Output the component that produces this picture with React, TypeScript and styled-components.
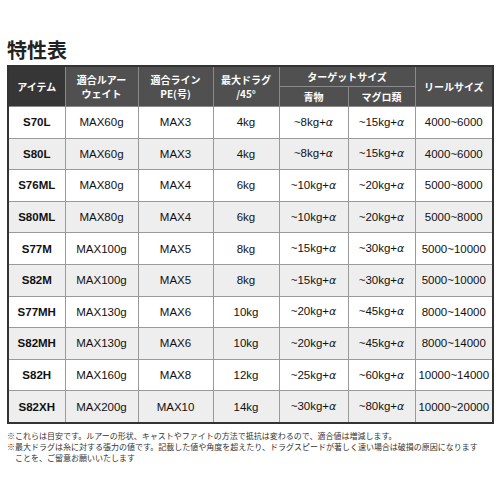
import styled, { createGlobalStyle } from "styled-components";

const GlobalStyle = createGlobalStyle`
  html, body {
    margin: 0;
    padding: 0;
    background: #fff;
  }
  body {
    font-family: "Liberation Sans", "Noto Sans CJK JP", sans-serif;
    color: #1a1a1a;
  }
`;

const Page = styled.div`
  width: 496px;
  height: 496px;
  box-sizing: border-box;
  padding: 38px 4px 0 7px;
`;

const Title = styled.h2`
  margin: 0 0 3px;
  font-family: "Noto Sans CJK JP", sans-serif;
  font-size: 20px;
  line-height: 24px;
  font-weight: 700;
  color: #222;
`;

const Table = styled.table`
  width: 485px;
  table-layout: fixed;
  border-collapse: collapse;
  border: 2px solid #333;
`;

const HeadCell = styled.th<{ $dark?: boolean }>`
  background: ${(p) => (p.$dark ? "#363636" : "#505050")};
  color: #fff;
  font-family: "Noto Sans CJK JP", sans-serif;
  font-size: 10px;
  font-weight: 700;
  line-height: 14px;
  height: 19px;
  padding: 0;
  text-align: center;
  vertical-align: middle;
  border: 1px solid #8a8a8a;
  border-top-color: #333;
`;

const HeadLine = styled.span`
  display: block;
  height: 14px;
  line-height: 14px;
  overflow: hidden;
`;

const Row = styled.tr<{ $alt: boolean }>`
  background: ${(p) => (p.$alt ? "#eeeeee" : "#ffffff")};
`;

const Cell = styled.td<{ $bold?: boolean }>`
  height: 30.6px;
  padding: 0;
  text-align: center;
  vertical-align: middle;
  font-size: 11.5px;
  font-weight: ${(p) => (p.$bold ? 700 : 400)};
  color: #111;
  border: 1px solid #9a9a9a;
  white-space: nowrap;
`;

const Alpha = styled.span`
  font-family: "DejaVu Sans", sans-serif;
  font-style: italic;
  font-size: 11px;
`;

const Notes = styled.div`
  margin-top: 6px;
  font-family: "Noto Sans CJK JP", sans-serif;
  font-size: 8px;
  line-height: 11px;
  color: #333;
`;

const Note = styled.p`
  margin: 0;
  padding-left: 8px;
  text-indent: -8px;
  white-space: nowrap;
`;

const widths = [57, 73, 75, 66, 69, 67, 78];

const rows = [
  ["S70L", "MAX60g", "MAX3", "4kg", "~8kg+", "~15kg+", "4000~6000"],
  ["S80L", "MAX60g", "MAX3", "4kg", "~8kg+", "~15kg+", "4000~6000"],
  ["S76ML", "MAX80g", "MAX4", "6kg", "~10kg+", "~20kg+", "5000~8000"],
  ["S80ML", "MAX80g", "MAX4", "6kg", "~10kg+", "~20kg+", "5000~8000"],
  ["S77M", "MAX100g", "MAX5", "8kg", "~15kg+", "~30kg+", "5000~10000"],
  ["S82M", "MAX100g", "MAX5", "8kg", "~15kg+", "~30kg+", "5000~10000"],
  ["S77MH", "MAX130g", "MAX6", "10kg", "~20kg+", "~45kg+", "8000~14000"],
  ["S82MH", "MAX130g", "MAX6", "10kg", "~20kg+", "~45kg+", "8000~14000"],
  ["S82H", "MAX160g", "MAX8", "12kg", "~25kg+", "~60kg+", "10000~14000"],
  ["S82XH", "MAX200g", "MAX10", "14kg", "~30kg+", "~80kg+", "10000~20000"],
];

export default function App() {
  return (
    <>
      <GlobalStyle />
      <Page>
        <Title>特性表</Title>
        <Table>
          <colgroup>
            {widths.map((w, i) => (
              <col key={i} style={{ width: w }} />
            ))}
          </colgroup>
          <thead>
            <tr>
              <HeadCell rowSpan={2} $dark>
                アイテム
              </HeadCell>
              <HeadCell rowSpan={2}>
                <HeadLine>適合ルアー</HeadLine>
                <HeadLine>ウェイト</HeadLine>
              </HeadCell>
              <HeadCell rowSpan={2}>
                <HeadLine>適合ライン</HeadLine>
                <HeadLine>PE(号)</HeadLine>
              </HeadCell>
              <HeadCell rowSpan={2}>
                <HeadLine>最大ドラグ</HeadLine>
                <HeadLine>/45°</HeadLine>
              </HeadCell>
              <HeadCell colSpan={2}>ターゲットサイズ</HeadCell>
              <HeadCell rowSpan={2}>リールサイズ</HeadCell>
            </tr>
            <tr>
              <HeadCell>青物</HeadCell>
              <HeadCell>マグロ類</HeadCell>
            </tr>
          </thead>
          <tbody>
            {rows.map((r, i) => (
              <Row key={r[0]} $alt={i % 2 === 1}>
                {r.map((v, j) => (
                  <Cell key={j} $bold={j === 0}>
                    {v}
                    {(j === 4 || j === 5) && <Alpha>α</Alpha>}
                  </Cell>
                ))}
              </Row>
            ))}
          </tbody>
        </Table>
        <Notes>
          <Note>
            ※これらは目安です。ルアーの形状、キャストやファイトの方法で抵抗は変わるので、適合値は増減します。
          </Note>
          <Note>
            ※最大ドラグは糸に対する張力の値です。記載した値や角度を超えたり、ドラグスピードが著しく速い場合は破損の原因になります
            <br />
            ことを、ご留意お願いいたします
          </Note>
        </Notes>
      </Page>
    </>
  );
}
